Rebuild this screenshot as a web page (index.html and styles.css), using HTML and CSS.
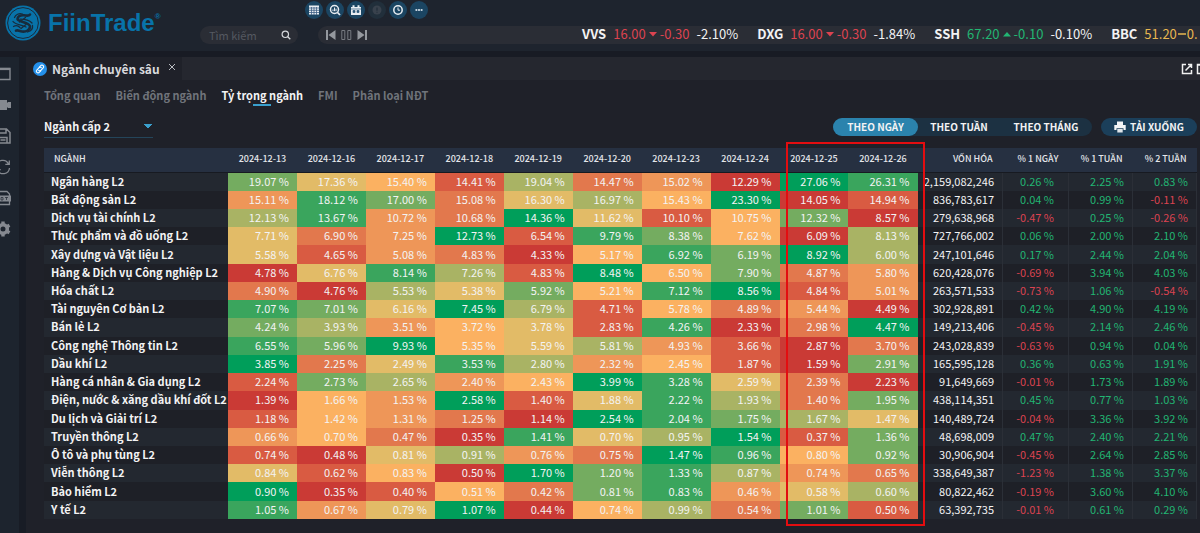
FILE: index.html
```html
<!DOCTYPE html>
<html lang="vi">
<head>
<meta charset="utf-8">
<meta name="viewport" content="width=device-width, initial-scale=1">
<title>FiinTrade - Ngành chuyên sâu</title>
<link rel="stylesheet" href="styles.css">
</head>
<body>
<div class="app">
  <header class="topbar">
    <a class="brand" href="#">
      <svg class="brand-mark" viewBox="0 0 36 36" aria-hidden="true">
        <circle cx="18" cy="18" r="17.5" fill="#0873a9"/>
        <circle cx="18" cy="18" r="15.4" fill="none" stroke="#1b2a3a" stroke-width="1"/>
        <g fill="none" stroke="#182b3c" stroke-linecap="round">
          <path d="M25 9.500c-1.500 2-3.500 1-6 .8-4-.3-6.500 1.200-6.500 3.600 0 3.200 12.500 3 12.500 7.600 0 3.500-4 5.500-8 5-3-.3-4-1.800-6-.8" stroke-width="2.600"/>
          <path d="M9.500 12.500c1-3 4.500-4.500 8-3.500M8 16.500c2 3 9 3.500 13 5.500M15 14.200c4 0 9 .6 12 3.800M8.500 21.500c2.500-1.500 5-.5 6.500 1M22.500 27c3.500-1 5.500-3.500 5-6.500M14.500 17l6-4.500M16 23.500l5-4" stroke-width="1.300"/>
        </g>
      </svg>
      <span class="brand-name">FiinTrade<sup>®</sup></span>
    </a>
    <form class="search" role="search">
      <input type="text" placeholder="Tìm kiếm" aria-label="Tìm kiếm">
      <button type="button" aria-label="Tìm">
        <svg viewBox="0 0 10 10"><circle cx="4.300" cy="4.300" r="3.200" fill="none" stroke="#d5d8dc" stroke-width="1.200"/><path d="M6.700 6.700L9.300 9.300" stroke="#d5d8dc" stroke-width="1.300"/></svg>
      </button>
    </form>
    <div class="feed">
      <nav class="tools" aria-label="Công cụ">
        <button type="button" aria-label="Bảng"><svg viewBox="0 0 12 12"><rect x="1" y="1.500" width="10" height="9" fill="#e8edf2"/><path d="M1 4h10M1 6.300h10M1 8.500h10M3.500 3v8M6 3v8M8.500 3v8" stroke="#3d5f85" stroke-width=".8"/></svg></button>
        <button type="button" aria-label="Tra cứu"><svg viewBox="0 0 12 12"><circle cx="5.500" cy="5.500" r="4" fill="none" stroke="#e8edf2" stroke-width="1.500"/><path d="M8.500 8.500l2.500 2.500" stroke="#e8edf2" stroke-width="1.700"/><path d="M4 7.200V5.500M5.500 7.200V3.500M7 7.200V4.700" stroke="#e8edf2"/></svg></button>
        <button type="button" aria-label="Lịch"><svg viewBox="0 0 12 12"><path d="M1 3h10v8H1zM2.500 1.200h2v2h-2zM7.500 1.200h2v2h-2z" fill="#e8edf2"/><path d="M1 5h10M3 6.500h2v2H3zM7 6.500h2v2H7z" stroke="#2b5878" stroke-width=".7" fill="#2b5878"/></svg></button>
        <button type="button" class="dim" aria-label="Thông tin"><svg viewBox="0 0 12 12"><circle cx="6" cy="6" r="4.500" fill="#39424d"/><path d="M6 3.500v3.300M6 7.700v1" stroke="#222e3a" stroke-width="1.200"/></svg></button>
        <button type="button" aria-label="Lịch sử"><svg viewBox="0 0 12 12"><circle cx="6" cy="6" r="4.200" fill="none" stroke="#e8edf2" stroke-width="1.500"/><path d="M6 3.500V6.200H8" fill="none" stroke="#e8edf2"/></svg></button>
        <button type="button" aria-label="Thêm"><svg viewBox="0 0 12 12"><path d="M2.500 5h1.800v2H2.500zM5.100 5h1.800v2H5.100zM7.700 5h1.800v2H7.700z" fill="#c5d3df"/></svg></button>
      </nav>
      <div class="ticker">
        <div class="player">
          <button type="button" aria-label="Trước"><svg viewBox="0 0 11 12"><path d="M1 1h2v10H1zM10.500 1v10L3.500 6z" fill="#94989e"/></svg></button>
          <button type="button" aria-label="Tạm dừng"><svg viewBox="0 0 11 12"><path d="M.8 1.500h3v9h-3zM6.800 1.500h3v9h-3z" fill="none" stroke="#777b82"/></svg></button>
          <button type="button" aria-label="Sau"><svg viewBox="0 0 11 12"><path d="M8 1h2v10H8zM.5 1v10l7-5z" fill="#94989e"/></svg></button>
        </div>
        <ul class="quotes">
          <li><b>VVS</b><span class="px down">16.00<svg viewBox="0 0 8 6"><path d="M0 1h8L4 5.500z" fill="currentColor"/></svg>-0.30</span><span>-2.10%</span></li>
          <li><b>DXG</b><span class="px down">16.00<svg viewBox="0 0 8 6"><path d="M0 1h8L4 5.500z" fill="currentColor"/></svg>-0.30</span><span>-1.84%</span></li>
          <li><b>SSH</b><span class="px up">67.20<svg viewBox="0 0 8 6"><path d="M0 5.500h8L4 1z" fill="currentColor"/></svg>-0.10</span><span>-0.10%</span></li>
          <li><b>BBC</b><span class="px flat">51.20<svg viewBox="0 0 8 6"><path d="M0 2.300h8v1.500H0z" fill="currentColor"/></svg>0.</span></li>
        </ul>
      </div>
    </div>
  </header>

  <div class="body">
    <aside class="rail">
      <button type="button" aria-label="Cửa sổ"><svg viewBox="0 0 16 16"><path d="M1 2.500h14v11H1z" fill="none" stroke="#858990" stroke-width="1.400"/><path d="M1 3h14" stroke="#858990" stroke-width="2.200"/></svg></button>
      <button type="button" aria-label="Video"><svg viewBox="0 0 16 16"><path d="M0 3h12v3l1-1h3v6h-3l-1-1v3H0z" fill="#858990"/></svg></button>
      <button type="button" aria-label="Lưu"><svg viewBox="0 0 16 16"><path d="M1 1h10.500L15 4.500V15H1zM4 1v4h7V1M4 15V9.500h8V15M5.500 12h5" fill="none" stroke="#858990" stroke-width="1.500"/></svg></button>
      <button type="button" aria-label="Làm mới"><svg viewBox="0 0 16 16"><path d="M1.500 7A6.300 6.300 0 0 1 13.500 5M14.500 9A6.300 6.300 0 0 1 2.500 11M14.300 1.500V5.300h-4M1.700 14.500v-3.800h4" fill="none" stroke="#858990" stroke-width="1.300"/></svg></button>
      <button type="button" aria-label="Ghi chép"><svg viewBox="0 0 16 16"><path d="M2 6V1.500h10L14.500 4v2M2 11v3.500h12.500V11" fill="none" stroke="#858990" stroke-width="1.300"/><path d="M0 5.500h16v6H0z" fill="#858990"/><path d="M2 10V7.500l1.500 2.500V7.500M6 7.500v2.500h2V7.500zM10 7.500h3M11.500 7.500V10" fill="none" stroke="#1d242e" stroke-width=".7"/></svg></button>
      <button type="button" aria-label="Cài đặt"><svg viewBox="0 0 16 16"><circle cx="8" cy="8" r="4.300" fill="none" stroke="#858990" stroke-width="3.600"/><path d="M8 .5v3M8 12.500v3M1.500 4.300l2.600 1.500M11.900 10.200l2.600 1.500M1.500 11.700l2.600-1.500M11.900 5.800l2.600-1.500" stroke="#858990" stroke-width="3.400"/></svg></button>
    </aside>

    <main class="panel">
      <div class="windowbar">
        <div class="window-tab">
          <svg class="link-icon" viewBox="0 0 14 14" aria-hidden="true"><circle cx="7" cy="7" r="7" fill="#2490ea"/><g fill="none" stroke="#fff" stroke-width="1.100" stroke-linecap="round"><path d="M6.300 5.200l1.500-1.600a1.600 1.600 0 0 1 2.400 2.300L7.900 8.300a1.500 1.500 0 0 1-2.200 0"/><path d="M7.700 8.800l-1.500 1.600a1.600 1.600 0 0 1-2.400-2.300l2.300-2.400a1.500 1.500 0 0 1 2.200 0"/></g></svg>
          <h1>Ngành chuyên sâu</h1>
          <button type="button" class="close" aria-label="Đóng"><svg viewBox="0 0 8 8"><path d="M1 1l6 6M7 1L1 7" stroke="#b9bcc1"/></svg></button>
        </div>
        <div class="window-actions">
          <button type="button" aria-label="Mở cửa sổ mới"><svg viewBox="0 0 12 12"><path d="M5 1.500H1.500v9h9V7M7 1.500h3.500V5M10.500 1.500l-6 6" fill="none" stroke="#f1f1f1" stroke-width="1.500"/></svg></button>
          <button type="button" aria-label="Phóng to"><svg viewBox="0 0 12 12"><path d="M1.500 1.500h9v9h-9zM1 2h10" fill="none" stroke="#f1f1f1" stroke-width="1.500"/></svg></button>
        </div>
      </div>

      <div class="content">
        <nav class="tabs">
          <a href="#">Tổng quan</a>
          <a href="#">Biến động ngành</a>
          <a href="#" class="active" aria-current="page">Tỷ trọng ngành</a>
          <a href="#">FMI</a>
          <a href="#">Phân loại NĐT</a>
        </nav>

        <div class="controls">
          <select class="level" aria-label="Cấp ngành">
            <option>Ngành cấp 1</option>
            <option selected>Ngành cấp 2</option>
            <option>Ngành cấp 3</option>
          </select>
          <div class="actions">
            <div class="period">
              <button type="button" class="active">THEO NGÀY</button>
              <button type="button">THEO TUẦN</button>
              <button type="button">THEO THÁNG</button>
            </div>
            <button type="button" class="download">
              <svg viewBox="0 0 12 12" aria-hidden="true"><path d="M3 .5h6V4H3z" fill="#f2f4f6"/><path d="M.3 4h11.400v5H9.500V7.300h-7V9H.3z" fill="#f2f4f6"/><path d="M3.300 8h5.400v3.500H3.300z" fill="#dfe5ea"/></svg>
              TẢI XUỐNG
            </button>
          </div>
        </div>

        <div class="table-wrap">
          <table>
            <colgroup>
              <col class="c-name">
              <col span="10">
              <col class="c-cap">
              <col class="c-day">
              <col class="c-week">
              <col class="c-week">
            </colgroup>
            <thead>
              <tr>
                <th scope="col" class="name">NGÀNH</th>
                <th scope="col">2024-12-13</th>
                <th scope="col">2024-12-16</th>
                <th scope="col">2024-12-17</th>
                <th scope="col">2024-12-18</th>
                <th scope="col">2024-12-19</th>
                <th scope="col">2024-12-20</th>
                <th scope="col">2024-12-23</th>
                <th scope="col">2024-12-24</th>
                <th scope="col">2024-12-25</th>
                <th scope="col">2024-12-26</th>
                <th scope="col" class="stat">VỐN HÓA</th>
                <th scope="col" class="stat">% 1 NGÀY</th>
                <th scope="col" class="stat">% 1 TUẦN</th>
                <th scope="col" class="stat">% 2 TUẦN</th>
              </tr>
            </thead>
            <tbody id="rows"></tbody>
          </table>
          <div class="highlight"></div>
        </div>
      </div>
    </main>
  </div>
</div>
<script src="app.js"></script>
</body>
</html>
```

FILE: styles.css
```css
* {
  box-sizing: border-box;
}

body {
  margin: 0;
  background: #1f2129;
  color: #f3f3f4;
  font-family: "Noto Sans CJK SC", "Noto Sans", sans-serif;
  font-size: 11px;
  line-height: 16px;
}

button,
input,
select {
  margin: 0;
  padding: 0;
  border: 0;
  background: none;
  color: inherit;
  font: inherit;
}

svg {
  display: block;
}

a {
  color: inherit;
  text-decoration: none;
}

.app {
  display: flex;
  flex-direction: column;
  height: 100vh;
  overflow: hidden;
}

/* Top bar */
.topbar {
  display: flex;
  flex: none;
  height: 57px;
  background: #1e242e;
  border-bottom: 6px solid #181b24;
}

.brand {
  display: flex;
  flex: none;
  align-items: center;
  gap: 7px;
  width: 200px;
  padding: 0 0 5px 5px;
  color: #0873a9;
}

.brand-mark {
  width: 36px;
  height: 36px;
}

.brand-name {
  font: bold 24px/28px "Liberation Sans", Arial, sans-serif;
}

.brand-name sup {
  font-size: 8px;
  line-height: 8px;
  vertical-align: 12px;
}

.search {
  display: flex;
  flex: none;
  align-items: center;
  align-self: flex-end;
  width: 98px;
  height: 18px;
  margin-bottom: 7px;
  padding: 0 7px 0 9px;
  border-radius: 9px;
  background: #2a2d35;
}

.search input {
  flex: 1;
  min-width: 0;
  font-size: 11px;
  line-height: 18px;
}

.search input::placeholder {
  color: #555961;
}

.search svg {
  width: 10px;
  height: 10px;
}

.feed {
  display: flex;
  flex: 1;
  flex-direction: column;
  justify-content: space-between;
  min-width: 0;
  padding: 1px 0 7px 7px;
}

.tools {
  display: flex;
  gap: 3px;
}

.tools button {
  display: grid;
  place-items: center;
  width: 18px;
  height: 18px;
  border-radius: 50%;
  background: #1b4562;
}

.tools .dim {
  background: #212f3b;
}

.tools svg {
  width: 12px;
  height: 12px;
}

.ticker {
  display: flex;
  align-items: center;
  gap: 214px;
  height: 18px;
  margin-left: 13px;
  padding-left: 7px;
  border-radius: 9px 0 0 9px;
  background: #2a2d35;
  overflow: hidden;
}

.player {
  display: flex;
  flex: none;
  gap: 5px;
}

.player svg {
  width: 11px;
  height: 12px;
}

.quotes {
  display: flex;
  gap: 19px;
  margin: 0;
  padding: 0 0 2px;
  list-style: none;
  font-size: 13px;
  line-height: 18px;
  white-space: nowrap;
}

.quotes li {
  display: flex;
  gap: 7px;
}

.px {
  display: flex;
  align-items: center;
  gap: 3px;
}

.px svg {
  width: 8px;
  height: 6px;
}

.up {
  color: #22b573;
}

.down {
  color: #dc4350;
}

.flat {
  gap: 1px;
  color: #e9b850;
}

/* Side rail */
.body {
  display: flex;
  flex: 1;
  min-height: 0;
}

.rail {
  display: flex;
  flex: none;
  flex-direction: column;
  align-items: flex-end;
  gap: 15px;
  width: 26px;
  padding: 9px 8px 0 0;
  border-right: 7px solid #181c25;
  background: #1d242e;
  overflow: hidden;
}

.rail svg {
  width: 16px;
  height: 16px;
}

/* Panel */
.panel {
  display: flex;
  flex: 1;
  flex-direction: column;
  min-width: 0;
}

.windowbar {
  display: flex;
  flex: none;
  justify-content: space-between;
  height: 23px;
  background: #25272f;
}

.window-tab {
  display: flex;
  align-items: center;
  gap: 5px;
  width: 156px;
  padding-left: 7px;
  background: #1f2129;
}

.link-icon {
  flex: none;
  width: 14px;
  height: 14px;
}

.window-tab h1 {
  margin: 0;
  color: #d9dadd;
  font-size: 12px;
  line-height: 20px;
  white-space: nowrap;
}

.close {
  padding: 0 4px 4px 3px;
}

.close svg {
  width: 8px;
  height: 8px;
}

.window-actions {
  display: flex;
  align-items: center;
  gap: 3px;
  width: 19px;
  overflow: hidden;
}

.window-actions button {
  flex: none;
}

.window-actions svg {
  width: 12px;
  height: 12px;
}

.content {
  display: flex;
  flex: 1;
  flex-direction: column;
  min-height: 0;
  padding: 6px 3px 14px 18px;
}

.tabs {
  display: flex;
  gap: 15px;
  height: 20px;
  color: #70747b;
  font-weight: bold;
  line-height: 18px;
}

.tabs .active {
  display: flex;
  flex-direction: column;
  align-items: center;
  color: #f3f3f4;
}

.tabs .active::after {
  content: "";
  width: 18px;
  height: 2px;
  background: #3aa0cd;
}

.controls {
  display: flex;
  flex: none;
  align-items: center;
  justify-content: space-between;
  height: 22px;
  margin: 10px 0;
}

.level {
  width: 109px;
  height: 22px;
  padding-bottom: 2px;
  border-bottom: 1px solid #24455a;
  appearance: none;
  background-image: linear-gradient(to bottom left, #3aa0cd 50%, transparent 51%),
    linear-gradient(to bottom right, #3aa0cd 50%, transparent 51%);
  background-position: 100px 8px, 104px 8px;
  background-size: 4px 4px;
  background-repeat: no-repeat;
  font-weight: bold;
}

.actions {
  display: flex;
  gap: 9px;
  font-weight: bold;
}

.period {
  display: flex;
  border-radius: 9px;
  background: #1c3142;
}

.period button {
  width: 92px;
  height: 18px;
  border-radius: 9px;
  font-size: 10px;
  line-height: 18px;
}

.period .active {
  width: 85px;
  background: #2b83ad;
}

.period .active + button {
  width: 82px;
}

.download {
  display: flex;
  align-items: center;
  justify-content: center;
  gap: 4px;
  width: 96px;
  height: 18px;
  border-radius: 9px;
  background: #1b3f5a;
  font-size: 10px;
  line-height: 18px;
}

.download svg {
  width: 12px;
  height: 12px;
}

/* Heat map table */
.table-wrap {
  position: relative;
  flex: 1;
  min-height: 0;
}

table {
  width: 100%;
  height: 100%;
  border-collapse: collapse;
  table-layout: fixed;
}

.c-name {
  width: 184px;
}

.c-cap {
  width: 85px;
}

.c-day {
  width: 66px;
}

.c-week {
  width: 64px;
}

th,
td {
  padding: 0 0 2px;
  white-space: nowrap;
}

thead th {
  height: 24px;
  border-bottom: 1px solid #171a21;
  background: #263041;
  color: #e4e6ea;
  font-size: 9px;
  font-weight: 500;
}

thead .name {
  padding-left: 10px;
  text-align: left;
}

thead .stat {
  padding-right: 10px;
  text-align: right;
}

tbody tr {
  background: #1e2027;
}

tbody tr:nth-child(odd) {
  background: #232830;
}

tbody th,
tbody td {
  line-height: 16px;
}

tbody th {
  padding-left: 7px;
  text-align: left;
}

tbody td {
  padding-right: 8px;
  text-align: right;
}

tbody .cap,
tbody .change {
  border-right: 1px solid #2b2f37;
}

tbody .day {
  padding-right: 14px;
}

.r1 { background: #009e5a; }
.r2 { background: #3aa55d; }
.r3 { background: #74ac60; }
.r4 { background: #a9b364; }
.r5 { background: #e2bb67; }
.r6 { background: #fbb161; }
.r7 { background: #ee9658; }
.r8 { background: #e2784d; }
.r9 { background: #d95b42; }
.r10 { background: #ca3a35; }

.highlight {
  position: absolute;
  top: -6px;
  right: 272px;
  bottom: -7px;
  width: 139px;
  border: 2px solid #e30d10;
  pointer-events: none;
}
```

FILE: app.js
```js
// name | ten daily weights | market cap | change over 1 day, 1 week, 2 weeks
const data = `
Ngân hàng L2|19.07 17.36 15.40 14.41 19.04 14.47 15.02 12.29 27.06 26.31|2,159,082,246|0.26 2.25 0.83
Bất động sản L2|15.11 18.12 17.00 15.08 16.30 16.97 15.43 23.30 14.05 14.94|836,783,617|0.04 0.99 -0.11
Dịch vụ tài chính L2|12.13 13.67 10.72 10.68 14.36 11.62 10.10 10.75 12.32 8.57|279,638,968|-0.47 0.25 -0.26
Thực phẩm và đồ uống L2|7.71 6.90 7.25 12.73 6.54 9.79 8.38 7.62 6.09 8.13|727,766,002|0.06 2.00 2.10
Xây dựng và Vật liệu L2|5.58 4.65 5.08 4.83 4.33 5.17 6.92 6.19 8.92 6.00|247,101,646|0.17 2.44 2.04
Hàng & Dịch vụ Công nghiệp L2|4.78 6.76 8.14 7.26 4.83 8.48 6.50 7.90 4.87 5.80|620,428,076|-0.69 3.94 4.03
Hóa chất L2|4.90 4.76 5.53 5.38 5.92 5.21 7.12 8.56 4.84 5.01|263,571,533|-0.73 1.06 -0.54
Tài nguyên Cơ bản L2|7.07 7.01 6.16 7.45 6.79 4.71 5.78 4.89 5.44 4.49|302,928,891|0.42 4.90 4.19
Bán lẻ L2|4.24 3.93 3.51 3.72 3.78 2.83 4.26 2.33 2.98 4.47|149,213,406|-0.45 2.14 2.46
Công nghệ Thông tin L2|6.55 5.96 9.93 5.35 5.59 5.81 4.93 3.66 2.87 3.70|243,028,839|-0.63 0.94 0.04
Dầu khí L2|3.85 2.25 2.49 3.53 2.80 2.32 2.45 1.87 1.59 2.91|165,595,128|0.36 0.63 1.91
Hàng cá nhân & Gia dụng L2|2.24 2.73 2.65 2.40 2.43 3.99 3.28 2.59 2.39 2.23|91,649,669|-0.01 1.73 1.89
Điện, nước & xăng dầu khí đốt L2|1.39 1.66 1.53 2.58 1.40 1.88 2.22 1.93 1.40 1.95|438,114,351|0.45 0.77 1.03
Du lịch và Giải trí L2|1.18 1.42 1.31 1.25 1.14 2.54 2.04 1.75 1.67 1.47|140,489,724|-0.04 3.36 3.92
Truyền thông L2|0.66 0.70 0.47 0.35 1.41 0.70 0.95 1.54 0.37 1.36|48,698,009|0.47 2.40 2.21
Ô tô và phụ tùng L2|0.74 0.48 0.81 0.91 0.76 0.75 1.47 0.96 0.80 0.92|30,906,904|-0.45 2.64 2.85
Viễn thông L2|0.84 0.62 0.83 0.50 1.70 1.20 1.33 0.87 0.74 0.65|338,649,387|-1.23 1.38 3.37
Bảo hiểm L2|0.90 0.35 0.40 0.51 0.42 0.81 0.83 0.46 0.58 0.60|80,822,462|-0.19 3.60 4.10
Y tế L2|1.05 0.67 0.79 1.07 0.44 0.74 0.99 0.54 1.01 0.50|63,392,735|-0.01 0.61 0.29
`;

function cell(row, tag, text, className) {
  const el = document.createElement(tag);
  el.textContent = text;
  if (className) el.className = className;
  row.append(el);
  return el;
}

const body = document.getElementById("rows");

for (const line of data.trim().split("\n")) {
  const [name, weightText, cap, changeText] = line.split("|");
  const weights = weightText.split(" ");
  const row = document.createElement("tr");

  cell(row, "th", name).scope = "row";

  // Shade each day by its rank within the row; later days win ties.
  weights.forEach((value, i) => {
    const rank = 1 + weights.filter((other, j) =>
      Number(other) > Number(value) || (other === value && j > i)).length;
    cell(row, "td", value + " %", "r" + rank);
  });

  cell(row, "td", cap, "cap");

  changeText.split(" ").forEach((value, i) => {
    const tone = value.startsWith("-") ? "down" : "up";
    cell(row, "td", value + " %", "change " + tone + (i === 0 ? " day" : ""));
  });

  body.append(row);
}
```
